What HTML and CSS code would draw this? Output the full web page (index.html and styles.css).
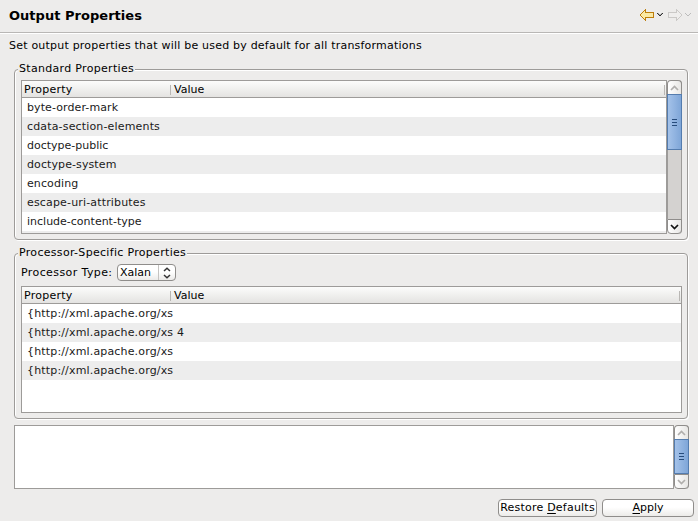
FILE: index.html
```html
<!DOCTYPE html>
<html lang="en">
<head>
<meta charset="utf-8">
<title>Output Properties</title>
<link rel="stylesheet" href="styles.css">
</head>
<body>
<header class="header">
  <h1>Output Properties</h1>
  <svg class="nav" width="54" height="16" viewBox="0 0 54 16" shape-rendering="crispEdges">
    <path d="M1.5 6.5 L6.5 1.5 V4.5 H14.5 V9.5 H6.5 V12.5 L1.5 7.5 Z" fill="#fbe9a4" stroke="#bd7d0c"/>
    <path d="M18 5.5h1M19 6.5h1M20 7.5h2M22 6.5h1M23 5.5h1" stroke="#333"/><path d="M19 5.5h1M22 5.5h1M20 6.5h2" stroke="#aaa"/>
    <path d="M42.500 6.500 L37.500 1.500 V4.500 H29.500 V9.500 H37.500 V12.500 L42.500 7.500 Z" fill="#efeeed" stroke="#cbc9c7"/>
    <path d="M46 5.500h1M47 6.500h1M48 7.500h2M50 6.500h1M51 5.500h1" stroke="#bbb"/>
  </svg>
</header>
<main>
  <p class="intro">Set output properties that will be used by default for all transformations</p>
  <section class="group standard">
    <h2>Standard Properties</h2>
    <div class="pane">
      <div class="table">
        <div class="thead"><span class="col">Property</span><span class="col2">Value</span></div>
        <div class="row"><span class="cell">byte-order-mark</span></div>
        <div class="row"><span class="cell wide">cdata-section-elements</span></div>
        <div class="row"><span class="cell tight">doctype-public</span></div>
        <div class="row"><span class="cell">doctype-system</span></div>
        <div class="row"><span class="cell">encoding</span></div>
        <div class="row"><span class="cell wide">escape-uri-attributes</span></div>
        <div class="row"><span class="cell tight">include-content-type</span></div>
        <div class="row"></div>
      </div>
      <div class="scroll">
        <div class="step up off"><svg width="9" height="6" viewBox="0 0 9 6"><path d="M1 5 4.500 1.500 8 5"/></svg></div>
        <div class="thumb long"><i></i><i></i><i></i></div>
        <div class="trough"></div>
        <div class="step down"><svg width="9" height="6" viewBox="0 0 9 6"><path d="M1 1 4.500 4.500 8 1"/></svg></div>
      </div>
    </div>
  </section>
  <section class="group specific">
    <h2>Processor-Specific Properties</h2>
    <div class="field">
      <span class="label">Processor Type:</span>
      <div class="combo"><span class="choice">Xalan</span><span class="arrows"><svg width="8" height="12" viewBox="0 0 8 12"><path d="M1 4 4 1.200 7 4M1 8 4 10.800 7 8"/></svg></span></div>
    </div>
    <div class="table">
      <div class="thead"><span class="col">Property</span><span class="col2">Value</span></div>
      <div class="row"><span class="cell wide">{http://xml.apache.org/xs</span></div>
      <div class="row"><span class="cell wide">{http://xml.apache.org/xs</span><span>4</span></div>
      <div class="row"><span class="cell wide">{http://xml.apache.org/xs</span></div>
      <div class="row"><span class="cell wide">{http://xml.apache.org/xs</span></div>
    </div>
  </section>
  <section class="pane description">
    <div class="textarea"></div>
    <div class="scroll">
      <div class="step up off"><svg width="9" height="6" viewBox="0 0 9 6"><path d="M1 5 4.500 1.500 8 5"/></svg></div>
      <div class="thumb"><i></i><i></i><i></i></div>
      <div class="step down off"><svg width="9" height="6" viewBox="0 0 9 6"><path d="M1 1 4.500 4.500 8 1"/></svg></div>
    </div>
  </section>
  <footer class="actions">
    <div class="button restore"><span>Restore <u>D</u>efaults</span></div>
    <div class="button apply"><span><u>A</u>pply</span></div>
  </footer>
</main>
</body>
</html>
```
FILE: styles.css
```css
* { box-sizing: border-box; }
body {
  margin: 0;
  width: 698px;
  height: 521px;
  overflow: hidden;
  background: #edeceb;
  color: #000;
  font: 11px/14px "DejaVu Sans", sans-serif;
  white-space: nowrap;
}
h1, h2, p { margin: 0; font-size: inherit; font-weight: normal; }
svg { display: block; fill: none; }
.header {
  display: flex;
  justify-content: space-between;
  height: 34px;
  padding: 8px 5px 0 9px;
  border-bottom: 1px solid #fff;
  box-shadow: inset 0 -1px #b9b7b5;
}
h1 { font-size: 13px; font-weight: bold; line-height: 16px; letter-spacing: 0.03px; }
.intro { height: 35px; padding: 5px 0 0 9px; letter-spacing: 0.21px; }
.group {
  width: 674px;
  margin-left: 14px;
  padding: 0 5px 0 6px;
  border: 1px solid #9d9b99;
  border-radius: 4px;
  box-shadow: 1px 1px #fff, inset 1px 1px #fff;
}
.standard { height: 171px; }
.specific { height: 166px; margin-top: 13px; }
h2 {
  width: max-content;
  height: 14px;
  margin: -8px 0 4px -3px;
  padding: 0 1px;
  background: #edeceb;
  letter-spacing: 0.31px;
}
.pane { display: flex; }
.table {
  height: 154px;
  flex: 1;
  border: 1px solid #9d9b99;
  background: #fff;
  overflow: hidden;
}
.specific .table { height: 127px; margin-top: 5px; }
.thead {
  position: relative;
  display: flex;
  align-items: center;
  height: 17px;
  padding: 1px 0 0 2px;
  border-bottom: 1px solid #9d9b99;
  background: linear-gradient(#fcfcfb, #e4e3e1);
}
.thead::after {
  content: "";
  position: absolute;
  right: 1px;
  top: 4px;
  height: 10px;
  border-right: 1px solid #b9b7b4;
}
.col { width: 147px; height: 10px; line-height: 10px; border-right: 1px solid #b9b7b4; letter-spacing: 0.25px; }
.col2 { padding-left: 3px; line-height: 12px; }
.row { display: flex; align-items: center; height: 19px; padding-left: 5px; color: #1a1a1a; }
.row:nth-child(odd) { background: #ededed; }
.cell { width: 150px; letter-spacing: 0.1px; }
.wide { letter-spacing: 0.16px; }
.tight { letter-spacing: 0; }
.scroll { display: flex; flex-direction: column; width: 15px; border-right: 1px solid #9d9b99; border-radius: 4px; }
.step {
  display: grid;
  place-items: center;
  width: 15px;
  height: 15px;
  border: 1px solid #8f8d8b;
  background: linear-gradient(90deg, #fff, #e7e6e4);
}
.up { border-radius: 4px 4px 0 0; height: 14px; border-bottom: 0; }
.down { border-radius: 0 0 4px 4px; }
.step path { stroke: #111; stroke-width: 1.7; }
.off path { stroke: #b0aeac; }
.thumb {
  display: flex;
  flex-direction: column;
  align-items: center;
  justify-content: center;
  gap: 2px;
  width: 15px;
  flex: 1;
  border: 1px solid #547cae;
  background: linear-gradient(90deg, #a4c2e9, #7fa6d8);
}
.thumb i { width: 5px; height: 1px; background: #274c7c; }
.long { flex: 0 0 56px; }
.trough { width: 15px; flex: 1; background: #d4d2d0; border: solid #9d9b99; border-width: 0 1px; }
.field { display: flex; height: 17px; }
.label { width: 96px; line-height: 17px; letter-spacing: 0.4px; }
.combo, .button {
  display: flex;
  border: 1px solid #8f8d8b;
  border-radius: 4px;
  background: linear-gradient(#fff 45%, #ecebe9);
  height: 18px;
  line-height: 15px;
}
.combo { width: 59px; height: 17px; }
.choice { width: 41px; padding-left: 2px; border-right: 1px solid #c5c3c1; }
.arrows { flex: 1; display: grid; place-items: center; }
.arrows path { stroke: #333; stroke-width: 1.5; }
.description { width: 675px; height: 64px; margin: 6px 0 0 14px; }
.textarea { flex: 1; border: 1px solid #9d9b99; background: #fff; }
.actions { display: flex; gap: 5px; margin: 10px 0 0 498px; }
.button { width: 99px; justify-content: center; line-height: 16px; }
.restore { letter-spacing: 0.22px; }
.apply { width: 92px; }
u { text-underline-offset: 2px; }
```
